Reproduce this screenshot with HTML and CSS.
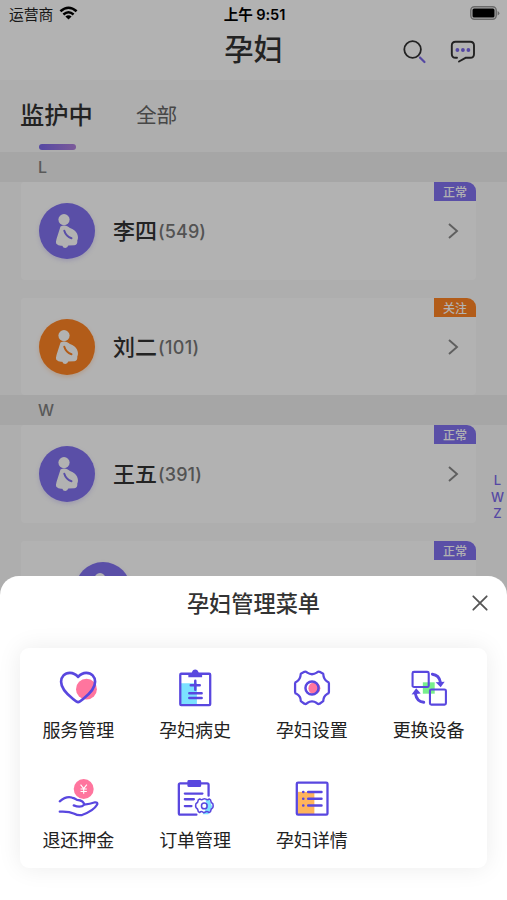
FILE: index.html
```html
<!DOCTYPE html>
<html lang="zh-CN">
<head>
<meta charset="utf-8">
<title>孕妇</title>
<link rel="stylesheet" href="styles.css">
</head>
<body>
<svg class="defs" width="0" height="0" aria-hidden="true">
  <symbol id="mother" viewBox="0 0 56 56">
    <circle cx="25" cy="16.600" r="5.600" fill="#fff"/>
    <path d="M21.500 23.500Q25 21.600 28.800 23.500L31 25Q36 26.500 38 30.500Q39.800 34.500 38.300 37.500Q38.800 41.500 35.500 42.300L29.300 42.500Q28.500 44.800 26.300 44.900Q24 44.900 23.300 42.700Q19.500 43.200 17.300 40.800Q16.500 39.500 17.500 36Z" fill="#fff"/>
    <path d="M25.300 27.800Q27 33.500 32.500 35.300" fill="none" stroke="var(--tone)" stroke-width="2" stroke-linecap="round"/>
  </symbol>
</svg>
<div class="screen">
  <header class="top">
    <div class="status">
      <div class="carrier"><span>运营商</span>
        <svg width="19" height="14" viewBox="0 0 18 14"><g fill="none" stroke="#000" stroke-width="2.500"><path d="M.9 5.300q8.100-7.200 16.200 0"/><path d="M3.900 8.500q5.100-4.400 10.200 0"/></g><path d="M5.900 10.400q3.100-2.400 6.200 0L9 13.500z"/></svg>
      </div>
      <div class="clock">上午 9:51</div>
      <svg class="battery" width="30" height="14" viewBox="0 0 30 14"><rect x=".8" y=".8" width="25.400" height="12.400" rx="3.600" fill="none" stroke="#999" stroke-width="1.500"/><rect x="2.500" y="2.500" width="22" height="9" rx="1.500"/><path d="M27.600 5v4.500q1.800-.7 1.800-2.200t-1.800-2.300z" fill="#999"/></svg>
    </div>
    <div class="nav">
      <h1>孕妇</h1>
      <div class="actions">
        <svg width="24" height="24" viewBox="0 0 24 24" fill="none" stroke-linecap="round"><circle cx="9.600" cy="9.500" r="8.300" stroke="#333" stroke-width="1.800"/><path d="M17 17.500l4.500 4.500" stroke="#7a68ea" stroke-width="2.200"/></svg>
        <svg width="26" height="24" viewBox="0 0 26 24" fill="none"><path d="M7 17.800H5.600q-3.800 0-3.800-3.800V5.600q0-3.800 3.800-3.800h14.600q3.800 0 3.800 3.800V14q0 3.800-3.800 3.800H15.500L9 21.500" stroke="#333" stroke-width="1.900" stroke-linecap="round" stroke-linejoin="round"/><g fill="#7a68ea"><circle cx="7.400" cy="10" r="1.900"/><circle cx="12.900" cy="10" r="1.900"/><circle cx="18.400" cy="10" r="1.900"/></g></svg>
      </div>
    </div>
  </header>
  <nav class="tabs"><span class="tab active">监护中</span><span class="tab">全部</span></nav>
  <main>
    <div class="section">L</div>
    <div class="group">
      <article class="card">
        <svg class="avatar"><use href="#mother"/></svg>
        <b>李四</b><span class="count">(549)</span>
        <svg class="chevron" viewBox="0 0 12 18"><path d="M2 2l8 7-8 7"/></svg>
        <span class="badge">正常</span>
      </article>
      <article class="card watch">
        <svg class="avatar"><use href="#mother"/></svg>
        <b>刘二</b><span class="count">(101)</span>
        <svg class="chevron" viewBox="0 0 12 18"><path d="M2 2l8 7-8 7"/></svg>
        <span class="badge">关注</span>
      </article>
    </div>
    <div class="section">W</div>
    <div class="group">
      <article class="card">
        <svg class="avatar"><use href="#mother"/></svg>
        <b>王五</b><span class="count">(391)</span>
        <svg class="chevron" viewBox="0 0 12 18"><path d="M2 2l8 7-8 7"/></svg>
        <span class="badge">正常</span>
      </article>
      <article class="card shifted">
        <svg class="avatar"><use href="#mother"/></svg>
        <span class="badge">正常</span>
      </article>
    </div>
  </main>
  <div class="index"><span>L</span><span>W</span><span>Z</span></div>
  <div class="mask"></div>
  <section class="sheet">
    <div class="sheet-head">
      <h2>孕妇管理菜单</h2>
      <svg class="close" width="16" height="16" viewBox="0 0 16 16"><path d="M1.300 1.300l13.400 13.400M14.700 1.300L1.300 14.700" stroke="#555" stroke-width="1.800" stroke-linecap="round"/></svg>
    </div>
    <div class="menu">
      <div class="item">
        <svg viewBox="0 0 40 40"><circle cx="28.900" cy="21.200" r="11" fill="#ff759e"/><path d="M20.100 34.800Q18.500 34.800 14.500 31.300C7 25.500 2.200 20 2.200 13.500C2.200 8 6 4 11.500 4Q16.500 4 20.100 8.300Q23.700 4 28.700 4C34.200 4 38 8 38 13.500C38 20 33.200 25.500 25.700 31.300Q21.700 34.800 20.100 34.800Z" class="line w28"/></svg>
        <span>服务管理</span>
      </div>
      <div class="item">
        <svg viewBox="0 0 40 40"><path d="M5 15h17v23H5z" fill="#7be1ff"/><rect x="4.500" y="5" width="31.500" height="33" rx="1" class="line w24"/><path d="M13 8.800V4.200h3.500Q17.500.6 20.200.6T24 4.200h3.500v4.600z" class="solid"/><path d="M20.300 12.300v9.500M15.500 17.100h9.500M14 25.500h13M14 30.500h13" class="line w26"/></svg>
        <span>孕妇病史</span>
      </div>
      <div class="item">
        <svg viewBox="0 0 40 40"><circle cx="22.500" cy="20.300" r="6.300" fill="#ff759e"/><path d="M12 3q2-.7 3 .8 5 3.400 10 0 1-1.500 3-.8l3.800 2q.4 6 4.200 8.200 1.800.3 1.800 1.800v9.500q-.2 1.500-1.800 1.800-4 2.200-4.200 7.500L28 36.600q-2 .8-3-.8-5-3.400-10 0-1 1.600-3 .8l-3.800-2.800q0-5.300-4.200-7.500-1.800-.3-1.800-1.800V15q0-1.500 1.800-1.800Q7.800 11 8.200 5z" class="line w24"/><circle cx="20" cy="20" r="6.900" class="line w26"/></svg>
        <span>孕妇设置</span>
      </div>
      <div class="item">
        <svg viewBox="0 0 40 40"><path d="M13.500 14h12.500v12H13.500z" fill="#79ef8d"/><rect x="2.700" y="3" width="17" height="16" rx="1.500" class="line w22"/><rect x="21" y="21.500" width="16.800" height="16" rx="1.500" class="line w22"/><path d="M23.500 5.500q7.300 1 8.500 8.500" class="line w30"/><path d="M27 14l9.500-.7-4.200 6z" class="solid"/><path d="M14.500 35q-7.500-.8-8.800-9" class="line w30"/><path d="M1.700 26.800l4.800-6.600 4.800 5.500z" class="solid"/></svg>
        <span>更换设备</span>
      </div>
      <div class="item">
        <svg viewBox="0 0 40 40"><circle cx="26" cy="10.500" r="10.500" fill="#ff759e"/><path d="M22.700 6l3.300 4 3.300-4M22.700 10.500h6.600M22.700 13.200h6.600M26 10.200v5.300" fill="none" stroke="#fff" stroke-width="1.200"/><path d="M.8 23.500q6.700-5.800 12.700-4 2.500.3 5.500 2.500 7 .5 7.500 5-3.500 3.800-11 .8M26.500 27q6-.8 11.500-2.500 3-.1 2.200 2.400-3.700 6.600-16 11-4.500.8-8-1.300-6-2.800-15.400-2.200" class="line w24"/></svg>
        <span>退还押金</span>
      </div>
      <div class="item">
        <svg viewBox="0 0 40 40"><path d="M21.500 37.500H4.500q-1.500 0-1.500-1.500V6q0-1.500 1.500-1.500h28.300q1.500 0 1.500 1.500v11.500" class="line w24"/><rect x="12" y="1" width="14.500" height="7.500" rx="1.500" class="solid"/><path d="M9.300 15.300h18.500M9.300 21.300h9.500M9.300 28.500h7" class="line w24"/><path d="M31 21.500h4l3 7.500-4 8h-6q6-7 3-15.500z" fill="#7be1ff"/><path d="M25 21q2 1.400 3.500.2 1.400-.7 3 0 2 1.200 3.300-.2l1.500 1q.3 3 2.500 4 .6 1.800 0 4-2.300 1.400-2.500 4.300l-1.500 1q-2.200-1.700-4-.5t-2.800-.2q-1.700-1-3 .7l-1.500-1q-.2-3-2.500-4.300-.6-2.200 0-4 2.300-1.300 2.500-4z" class="line w16"/><circle cx="29.800" cy="28.300" r="3" class="line w16"/></svg>
        <span>订单管理</span>
      </div>
      <div class="item">
        <svg viewBox="0 0 40 40"><path d="M5 13.500h17.500V37H5z" fill="#ffb45b"/><rect x="4" y="3.800" width="32.300" height="33.700" rx="1.300" class="line w24"/><path d="M16 13.700h14M16 20.800h14M16 28h14M10.700 13.700h.2M10.700 20.800h.2M10.700 28h.2" class="line w26"/></svg>
        <span>孕妇详情</span>
      </div>
    </div>
  </section>
</div>
</body>
</html>
```
FILE: styles.css
```css
* { box-sizing: border-box; }
body {
  margin: 0;
  font-family: Inter, "Noto Sans CJK SC", sans-serif;
  color: #333;
}
h1, h2 { margin: 0; font-weight: 500; }
svg { display: block; }
.defs { position: absolute; }
.screen {
  position: relative;
  height: 900px;
  overflow: hidden;
  background: #fafafa;
}
.top { height: 80px; background: #fff; }
.status {
  display: grid;
  grid-template-columns: 1fr auto 1fr;
  align-items: center;
  height: 26px;
  padding: 0 7px 0 9px;
  color: #000;
}
.carrier { display: flex; align-items: center; gap: 6px; font-size: 14.800px; color: #222; }
.clock { font-size: 14.600px; font-weight: 600; letter-spacing: -.1px; }
.battery { justify-self: end; }
.nav {
  display: grid;
  grid-template-columns: 1fr auto 1fr;
  align-items: center;
  height: 44px;
  margin-top: 2px;
  padding: 0 31px;
}
.nav h1 { grid-column: 2; font-size: 29.300px; line-height: 44px; }
.actions { display: flex; justify-content: flex-end; gap: 23px; padding-top: 3px; }
.tabs { display: flex; align-items: flex-start; gap: 43px; height: 72px; padding: 16px 20px 0; }
.tab { padding-top: 1px; font-size: 20.700px; line-height: 38px; color: #666; }
.active {
  display: flex;
  flex-direction: column;
  padding-top: 0;
  font-size: 24.300px;
  font-weight: 500;
  color: #333;
}
.active::after {
  content: "";
  width: 37px;
  height: 6px;
  margin: 10px 0 0 19px;
  border-radius: 3px;
  background: linear-gradient(90deg, #7a68ea, #b182dc);
}
.section {
  height: 30px;
  padding-left: 38px;
  background: #eee;
  color: #808080;
  font-size: 16px;
  font-weight: 500;
  line-height: 31px;
}
.group { display: grid; gap: 18px; padding: 0 31px 0 21px; }
.card {
  --tone: #8272ef;
  position: relative;
  display: flex;
  align-items: center;
  height: 98px;
  padding: 0 17px 0 18px;
  border-radius: 3px 9px 4px 4px;
  background: #fff;
}
.card:nth-child(2) { height: 97px; }
.watch { --tone: #ff8424; }
.card.shifted { padding-left: 54px; }
.avatar {
  width: 56px;
  height: 56px;
  margin-right: 18px;
  border-radius: 50%;
  background: var(--tone);
  box-shadow: 0 2px 4px #8272ef40;
}
.watch .avatar { box-shadow: 0 2px 4px #ff842440; }
.card b { font-size: 22px; font-weight: 500; line-height: 32px; }
.count { padding-left: 1px; font-size: 18px; font-weight: 500; color: #777; letter-spacing: .1px; }
.watch .count { padding-top: 1px; letter-spacing: .3px; }
.chevron { width: 12px; height: 18px; margin-left: auto; fill: none; stroke: #888; stroke-width: 1.900; }
.badge {
  position: absolute;
  top: 0;
  right: 0;
  width: 42px;
  height: 19px;
  border-radius: 0 9px 0 0;
  background: var(--tone);
  color: #fff;
  font-size: 12px;
  font-weight: 500;
  line-height: 21px;
  text-align: center;
}
.index {
  position: absolute;
  right: 2px;
  top: 472px;
  display: grid;
  width: 15px;
  color: #7a68ea;
  font-size: 13px;
  font-weight: 500;
  line-height: 16.700px;
  justify-items: center;
}
.mask { position: absolute; inset: 0; background: rgba(0, 0, 0, .3); }
.sheet {
  position: absolute;
  inset: 576px 0 0;
  padding: 0 20px;
  border-radius: 19px 19px 0 0;
  background: #fff;
}
.sheet-head {
  display: grid;
  grid-template-columns: 1fr auto 1fr;
  align-items: center;
  height: 54px;
}
.sheet-head h2 { grid-column: 2; padding-top: 1px; font-size: 22.200px; line-height: 32px; }
.close { justify-self: end; margin-right: -1px; }
.menu {
  display: grid;
  grid-template-columns: repeat(4, 1fr);
  grid-auto-rows: 110px;
  height: 220px;
  margin-top: 18px;
  border-radius: 9px;
  background: #fff;
  box-shadow: 0 0 24px rgba(0, 0, 0, .08);
}
.item { display: flex; flex-direction: column; align-items: center; padding-top: 21px; }
.item svg { width: 38px; height: 38px; overflow: visible; }
.item span { margin-top: 10px; color: #222; font-size: 18px; line-height: 28px; }
.line { fill: none; stroke: #5947df; stroke-linecap: round; stroke-linejoin: round; }
.solid { fill: #5947df; }
.w16 { stroke-width: 1.600; }
.w22 { stroke-width: 2.200; }
.w24 { stroke-width: 2.400; }
.w26 { stroke-width: 2.600; }
.w28 { stroke-width: 2.800; }
.w30 { stroke-width: 3; }
```
